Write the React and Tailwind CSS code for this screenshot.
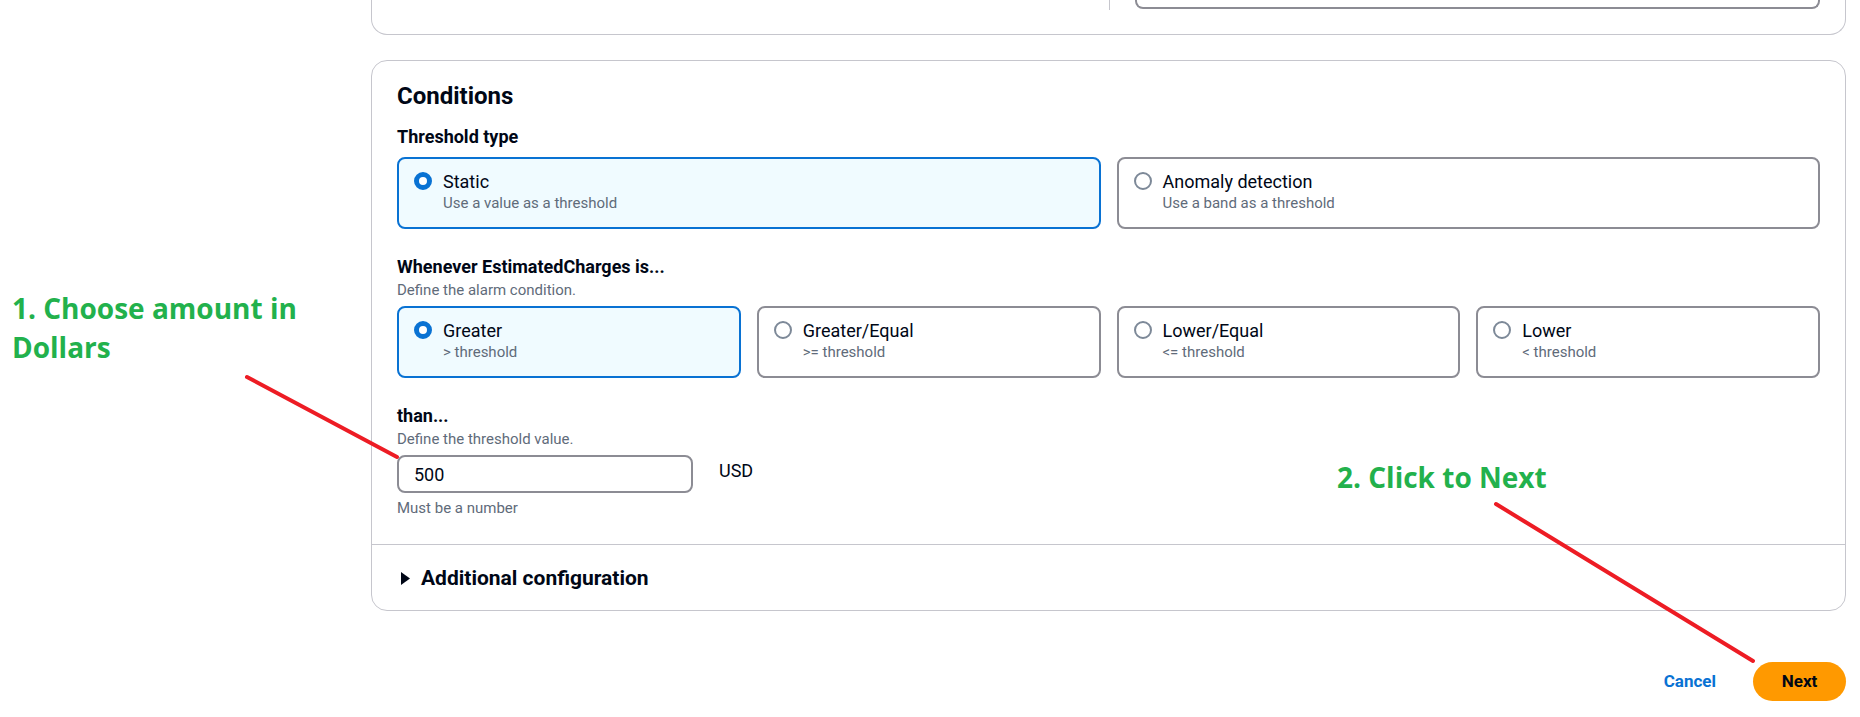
const font = { fontFamily: "Roboto, 'Noto Sans', sans-serif" };
const noteFont = { fontFamily: "'Open Sans', 'Noto Sans', sans-serif" };

function Radio({ checked }) {
  if (checked) {
    return <span className="mt-[2px] h-[18px] w-[18px] shrink-0 rounded-full border-[5px] border-[#0972d3] bg-white" />;
  }
  return <span className="mt-[2px] h-[18px] w-[18px] shrink-0 rounded-full border-2 border-[#7d8998] bg-white" />;
}

function Tile({ title, desc, checked }) {
  return (
    <div
      className={
        checked
          ? "flex h-[72px] gap-[11px] rounded-[8px] border-2 border-[#0972d3] bg-[#f0fbff] pl-[15px] pt-[11px]"
          : "flex h-[72px] gap-[11px] rounded-[8px] border-2 border-[#8c8c94] bg-white pl-[15px] pt-[11px]"
      }
    >
      <Radio checked={checked} />
      <div>
        <div className="text-[18px] leading-[23px] text-[#000716]">{title}</div>
        <div className="text-[15px] leading-[20px] text-[#5f6b7a]">{desc}</div>
      </div>
    </div>
  );
}

export default function App() {
  return (
    <div className="relative h-[717px] w-[1860px] overflow-hidden bg-white" style={font}>
      <div className="flex">
        <div className="w-[371px] shrink-0" />

        <div className="w-[1475px] shrink-0">
          {/* previous panel, cut off at the top */}
          <div className="flex h-[35px] rounded-b-[16px] border-x border-b border-[#c6c6cd]">
            <div className="w-[737px] shrink-0" />
            <div className="h-[10px] w-px bg-[#c6c6cd]" />
            <div className="ml-[25px] h-[9px] w-[685px] rounded-b-[8px] border-x-2 border-b-2 border-[#8c8c94]" />
          </div>

          {/* Conditions panel */}
          <div className="mt-[25px] rounded-[16px] border border-[#c6c6cd]">
            <div className="px-[25px] pb-[26px] pt-[21px]">
              <h2 className="text-[24px] font-bold leading-[28px] text-[#000716]">Conditions</h2>

              <div className="mt-[17px] text-[18px] font-bold leading-[20px] text-[#000716]">Threshold type</div>
              <div className="mt-[10px] grid grid-cols-2 gap-[16px]">
                <Tile title="Static" desc="Use a value as a threshold" checked />
                <Tile title="Anomaly detection" desc="Use a band as a threshold" />
              </div>

              <div className="mt-[28px] text-[18px] font-bold leading-[20px] text-[#000716]">Whenever EstimatedCharges is...</div>
              <div className="mt-[3px] text-[15px] leading-[20px] text-[#5f6b7a]">Define the alarm condition.</div>
              <div className="mt-[6px] grid grid-cols-4 gap-[16px]">
                <Tile title="Greater" desc="> threshold" checked />
                <Tile title="Greater/Equal" desc=">= threshold" />
                <Tile title="Lower/Equal" desc="<= threshold" />
                <Tile title="Lower" desc="< threshold" />
              </div>

              <div className="mt-[28px] text-[18px] font-bold leading-[20px] text-[#000716]">than...</div>
              <div className="mt-[3px] text-[15px] leading-[20px] text-[#5f6b7a]">Define the threshold value.</div>
              <div className="mt-[6px] flex items-start gap-[26px]">
                <div className="flex h-[38px] w-[296px] items-center rounded-[8px] border-2 border-[#8c8c94] pl-[15px] text-[18px] text-[#000716]">
                  500
                </div>
                <div className="mt-[5px] text-[18px] leading-[22px] text-[#000716]">USD</div>
              </div>
              <div className="mt-[5px] text-[15px] leading-[20px] text-[#5f6b7a]">Must be a number</div>
            </div>

            <div className="flex items-center gap-[11px] border-t border-[#c6c6cd] pb-[20px] pl-[29px] pt-[21px]">
              <svg width="9" height="13" viewBox="0 0 9 13">
                <path d="M0 0 L9 6.5 L0 13 Z" fill="#000716" />
              </svg>
              <span className="text-[21px] font-bold leading-[24px] text-[#000716]">Additional configuration</span>
            </div>
          </div>

          {/* actions */}
          <div className="mt-[51px] flex items-center justify-end gap-[37px]">
            <button className="text-[17px] font-bold text-[#0972d3]">Cancel</button>
            <button className="h-[39px] w-[93px] rounded-full bg-[#ff9900] text-[17px] font-bold text-[#000716]">Next</button>
          </div>
        </div>
      </div>

      {/* tutorial annotations */}
      <div className="absolute left-[12px] top-[289px] text-[28px] font-bold leading-[39px] text-[#22b14c]" style={noteFont}>
        1. Choose amount in
        <br />
        Dollars
      </div>
      <div className="absolute left-[1337px] top-[458px] text-[28px] font-bold leading-[39px] text-[#22b14c]" style={noteFont}>
        2. Click to Next
      </div>
      <svg className="pointer-events-none absolute left-0 top-0" width="1860" height="717">
        <line x1="247" y1="377" x2="397" y2="457" stroke="#ed1c24" strokeWidth="4" strokeLinecap="round" />
        <line x1="1496" y1="504" x2="1753" y2="661" stroke="#ed1c24" strokeWidth="4" strokeLinecap="round" />
      </svg>
    </div>
  );
}
